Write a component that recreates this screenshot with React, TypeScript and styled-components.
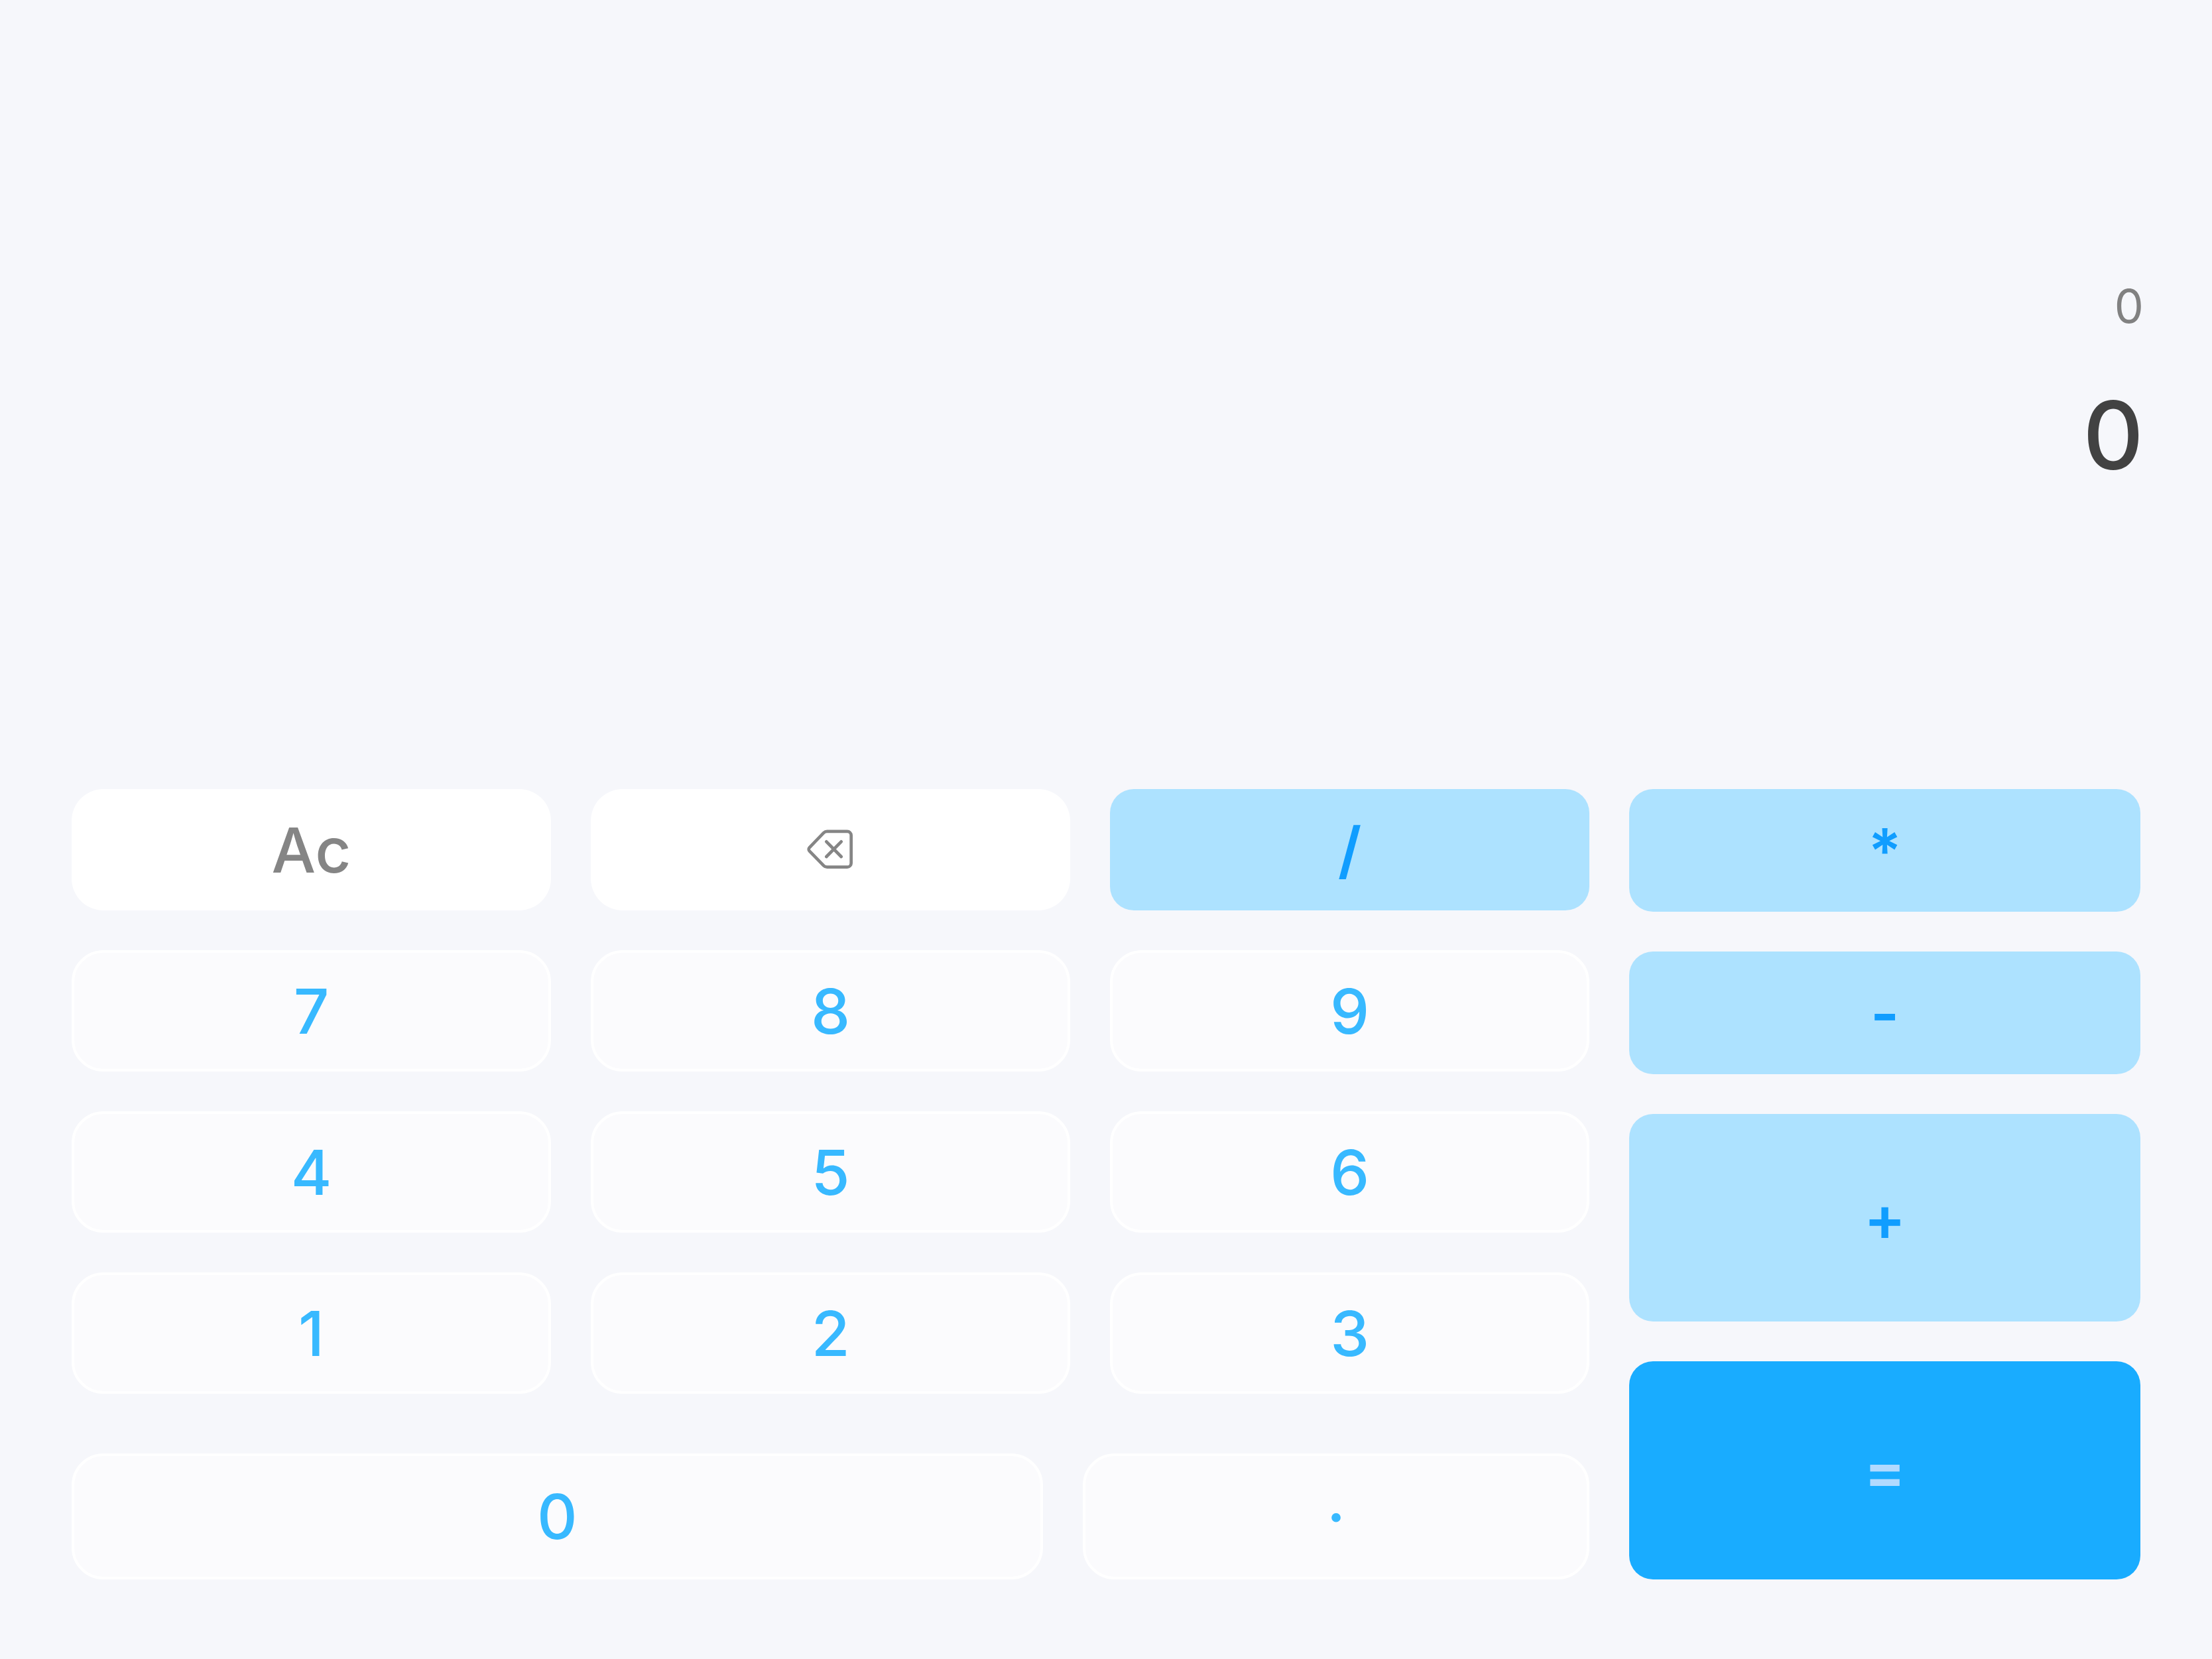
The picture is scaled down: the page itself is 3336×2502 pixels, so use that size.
import React, { useState } from "react";
import styled, { createGlobalStyle, css } from "styled-components";

const GlobalStyle = createGlobalStyle`
  *, *::before, *::after { box-sizing: border-box; }
  body {
    margin: 0;
    background: #f6f7fb;
    font-family: Inter, "Liberation Sans", sans-serif;
  }
`;

const Page = styled.main`
  display: flex;
  flex-direction: column;
  justify-content: flex-end;
  gap: 448px;
  min-height: 100vh;
  padding: 120px 0;
`;

const Display = styled.section`
  display: flex;
  flex-direction: column;
  align-items: flex-end;
  gap: 60px;
  padding: 0 103px;
`;

const Expression = styled.output`
  font-size: 70px;
  line-height: 96px;
  color: #818181;
`;

const Result = styled.output`
  font-size: 142px;
  font-weight: 500;
  line-height: 172px;
  color: #424242;
`;

const Keypad = styled.section`
  display: grid;
  grid-template-columns: 297fr 100fr;
  column-gap: 60px;
  padding: 0 108px;
`;

const MainKeys = styled.div`
  display: flex;
  flex-direction: column;
  gap: 90px;
`;

const KeyGrid = styled.div`
  display: grid;
  grid-template-columns: repeat(3, 1fr);
  grid-auto-rows: 183px;
  gap: 60px;
`;

const BottomRow = styled.div`
  display: grid;
  grid-template-columns: 23fr 12fr;
  grid-auto-rows: 190px;
  gap: 60px;
`;

const OperatorColumn = styled.div`
  display: grid;
  grid-template-rows: 185px 185px 313px 1fr;
  gap: 60px;
`;

type Tone = "number" | "utility" | "operator" | "equals";

const tones = {
  number: css`
    color: #38b9ff;
    background: #fbfbfd;
    border: 4px solid #ffffff;
    border-radius: 48px;
  `,
  utility: css`
    color: #858585;
    background: #ffffff;
    border-radius: 48px;
  `,
  operator: css`
    color: #109dff;
    background: #ade2ff;
    border-radius: 36px;
    font-weight: 600;
  `,
  equals: css`
    color: #b2daff;
    background: #19acff;
    border-radius: 36px;
    font-weight: 600;
  `,
};

const Key = styled.button<{ $tone: Tone }>`
  display: flex;
  align-items: center;
  justify-content: center;
  padding: 0;
  border: 0;
  font-family: inherit;
  font-size: 94px;
  font-weight: 500;
  line-height: 116px;
  cursor: pointer;
  ${({ $tone }) => tones[$tone]}
`;

const BackspaceSvg = styled.svg`
  width: 70px;
  height: 60px;
  overflow: visible;
`;

function BackspaceIcon() {
  return (
    <BackspaceSvg viewBox="4 4 210 180" fill="none" stroke="currentColor" strokeWidth="14" strokeLinecap="round" strokeLinejoin="round" aria-hidden="true">
      <path d="M92 9.5H183a18 18 0 0 1 18 18V153a18 18 0 0 1-18 18H92c-6 0-11-2-15-6L12 98a11 11 0 0 1 0-15L77 15.5c4-4 9-6 15-6Z" />
      <path d="M89 56l67 68M156 56l-67 68" />
    </BackspaceSvg>
  );
}

const digits = ["7", "8", "9", "4", "5", "6", "1", "2", "3"];

function evaluate(expression: string): string {
  const tokens = expression.match(/\d+\.?\d*|[-+*/]/g) ?? [];
  const terms: number[] = [];
  let op = "+";
  for (const token of tokens) {
    if (/^[-+*/]$/.test(token)) {
      op = token;
      continue;
    }
    const n = Number(token);
    if (op === "+") terms.push(n);
    else if (op === "-") terms.push(-n);
    else {
      const last = terms.pop() ?? 0;
      terms.push(op === "*" ? last * n : last / n);
    }
  }
  return String(terms.reduce((sum, n) => sum + n, 0));
}

export default function App() {
  const [expression, setExpression] = useState("0");
  const [result, setResult] = useState("0");

  const press = (key: string) =>
    setExpression((prev) => (prev === "0" && /\d/.test(key) ? key : prev + key));
  const clear = () => {
    setExpression("0");
    setResult("0");
  };
  const erase = () => setExpression((prev) => prev.slice(0, -1) || "0");

  return (
    <>
      <GlobalStyle />
      <Page>
        <Display>
          <Expression>{expression}</Expression>
          <Result>{result}</Result>
        </Display>
        <Keypad>
          <MainKeys>
            <KeyGrid>
              <Key $tone="utility" onClick={clear}>Ac</Key>
              <Key $tone="utility" onClick={erase} aria-label="Backspace">
                <BackspaceIcon />
              </Key>
              <Key $tone="operator" onClick={() => press("/")}>/</Key>
              {digits.map((digit) => (
                <Key key={digit} $tone="number" onClick={() => press(digit)}>
                  {digit}
                </Key>
              ))}
            </KeyGrid>
            <BottomRow>
              <Key $tone="number" onClick={() => press("0")}>0</Key>
              <Key $tone="number" onClick={() => press(".")}>·</Key>
            </BottomRow>
          </MainKeys>
          <OperatorColumn>
            <Key $tone="operator" onClick={() => press("*")}>*</Key>
            <Key $tone="operator" onClick={() => press("-")}>-</Key>
            <Key $tone="operator" onClick={() => press("+")}>+</Key>
            <Key $tone="equals" onClick={() => setResult(evaluate(expression))}>=</Key>
          </OperatorColumn>
        </Keypad>
      </Page>
    </>
  );
}
